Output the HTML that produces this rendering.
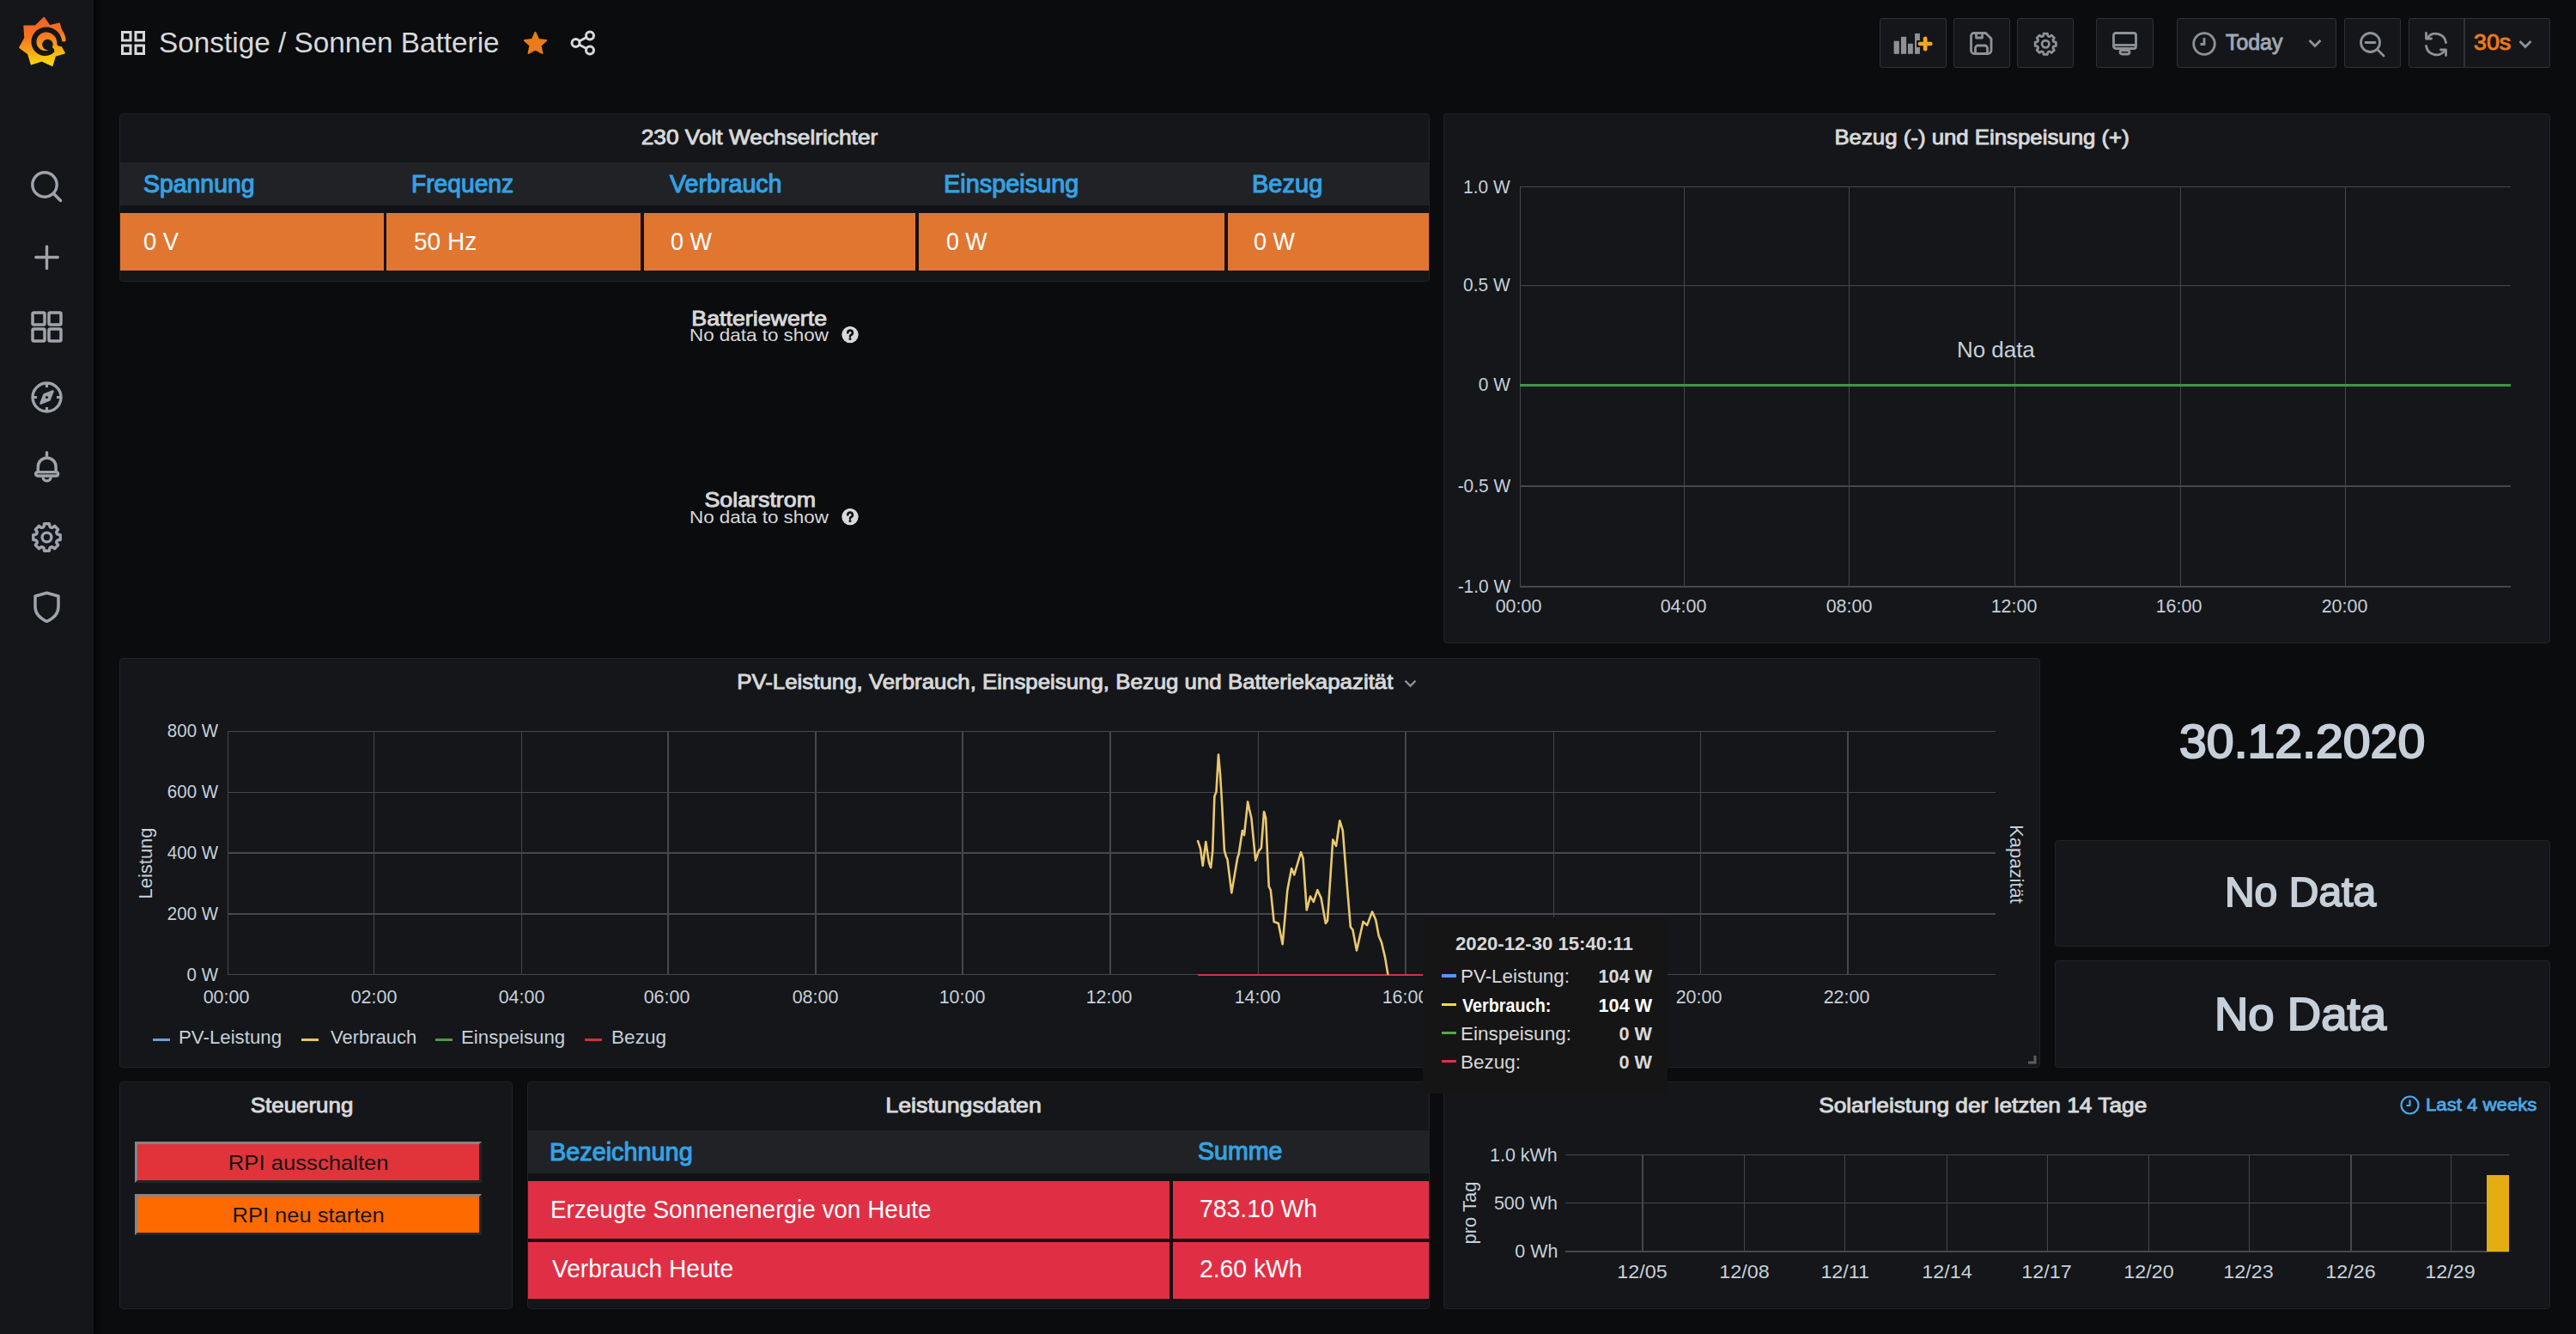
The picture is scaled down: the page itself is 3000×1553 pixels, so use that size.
<!DOCTYPE html>
<html><head><meta charset="utf-8"><style>
html,body{margin:0;padding:0;width:3000px;height:1553px;overflow:hidden;background:#0b0c0e;font-family:"Liberation Sans", sans-serif}
.a{position:absolute}
.t{position:absolute;line-height:1;white-space:nowrap;font-family:"Liberation Sans", sans-serif}
</style></head><body>
<div class="a" style="left:0px;top:0px;width:109px;height:1553px;background:#141619;"></div>
<div class="a" style="left:109px;top:0px;width:9px;height:1553px;background:linear-gradient(90deg,#040507,#0b0c0e);"></div>
<svg class="a" style="left:15px;top:15px" width="70" height="70" viewBox="0 0 70 70">
<defs><linearGradient id="lg" x1="0" y1="0" x2="0.15" y2="1">
<stop offset="0" stop-color="#f05a28"/><stop offset="0.45" stop-color="#f7791f"/><stop offset="1" stop-color="#fbd40c"/></linearGradient></defs>
<polygon fill="url(#lg)" stroke="url(#lg)" stroke-width="1.6" stroke-linejoin="round" points="36.20,5.51 42.61,14.94 54.04,12.33 56.07,19.06 59.01,24.27 60.52,29.03 60.86,32.00 55.31,38.21 60.07,46.69 49.26,50.04 45.65,61.39 33.68,55.85 21.51,59.81 17.73,47.51 7.87,40.40 14.10,29.15 13.12,15.22 26.52,14.99"/>
<path fill="none" stroke="#141619" stroke-width="6" stroke-linejoin="round" d="M46.69,42.89 L45.16,44.34 L43.38,45.51 L41.41,46.37 L39.29,46.88 L37.10,47.01 L34.89,46.75 L32.74,46.11 L30.71,45.09 L28.88,43.72 L27.30,42.04 L26.02,40.08 L25.09,37.91 L24.55,35.59 L24.42,33.19 L24.71,30.78 L25.42,28.44 L26.54,26.24 L28.04,24.24 L29.89,22.53 L32.02,21.15 L34.38,20.15 L36.90,19.57 L39.51,19.44 L42.12,19.77 L44.66,20.55 L47.04,21.77 L49.19,23.41 L51.04,25.41 L52.53,27.72 L53.59,30.28 L54.21,33.00 L54.34,35.81 L63,37"/>
<circle cx="40.4" cy="37.0" r="6.2" fill="#141619"/>
<path fill="none" stroke="#141619" stroke-width="4.2" stroke-linecap="round" d="M41.5 39 L46 43"/>
</svg>
<svg class="a" style="left:36.0px;top:199.0px" width="37" height="37" viewBox="0 0 37 37"><circle cx="16" cy="16" r="14.2" fill="none" stroke="#9fa3ab" stroke-width="3.4"/><path d="M26.5 26.5 L34.5 34.5" stroke="#9fa3ab" stroke-width="3.6" stroke-linecap="round"/></svg>
<svg class="a" style="left:36.0px;top:280.5px" width="37" height="37" viewBox="0 0 37 37"><path d="M18.5 6 V31.5 M5.8 18.5 H31.3" stroke="#9fa3ab" stroke-width="3.4" stroke-linecap="round"/></svg>
<svg class="a" style="left:36.0px;top:362.0px" width="37" height="37" viewBox="0 0 37 37"><rect x="2" y="2" width="14" height="14" rx="1.5" fill="none" stroke="#9fa3ab" stroke-width="3.5"/><rect x="21" y="2" width="14" height="14" rx="1.5" fill="none" stroke="#9fa3ab" stroke-width="3.5"/><rect x="2" y="21" width="14" height="14" rx="1.5" fill="none" stroke="#9fa3ab" stroke-width="3.5"/><rect x="21" y="21" width="14" height="14" rx="1.5" fill="none" stroke="#9fa3ab" stroke-width="3.5"/></svg>
<svg class="a" style="left:36.0px;top:443.5px" width="37" height="37" viewBox="0 0 37 37"><circle cx="18.5" cy="18.5" r="16.5" fill="none" stroke="#9fa3ab" stroke-width="3.4"/><path d="M18.5 2.5 V7 M18.5 30 V34.5 M2.5 18.5 H7 M30 18.5 H34.5" stroke="#9fa3ab" stroke-width="3.2"/><path d="M25.5 11.5 L21.5 21.5 L11.5 25.5 L15.5 15.5 Z" fill="#9fa3ab" stroke="#9fa3ab" stroke-width="2.6" stroke-linejoin="round"/><circle cx="18.5" cy="18.5" r="1.6" fill="#141619"/></svg>
<svg class="a" style="left:36.0px;top:525.0px" width="37" height="37" viewBox="0 0 37 37"><path d="M18.5 1.8 V5.5" stroke="#9fa3ab" stroke-width="3.4" stroke-linecap="round"/><path d="M8.3 24.5 V18.4 A10.4 10.4 0 0 1 29.1 18.4 V24.5" fill="none" stroke="#9fa3ab" stroke-width="3.5"/><rect x="5.6" y="24.6" width="26" height="4.4" rx="2.2" fill="none" stroke="#9fa3ab" stroke-width="3.4"/><path d="M14 30.3 A4.6 4.6 0 0 0 23.2 30.3" fill="none" stroke="#9fa3ab" stroke-width="3.3"/></svg>
<svg class="a" style="left:36.0px;top:606.5px" width="37" height="37" viewBox="0 0 37 37"><polygon points="13.75,7.04 15.05,6.07 15.58,2.77 21.42,2.77 21.95,6.07 23.25,7.04 24.85,7.27 27.56,5.31 31.69,9.44 29.73,12.15 29.96,13.75 30.93,15.05 34.23,15.58 34.23,21.42 30.93,21.95 29.96,23.25 29.73,24.85 31.69,27.56 27.56,31.69 24.85,29.73 23.25,29.96 21.95,30.93 21.42,34.23 15.58,34.23 15.05,30.93 13.75,29.96 12.15,29.73 9.44,31.69 5.31,27.56 7.27,24.85 7.04,23.25 6.07,21.95 2.77,21.42 2.77,15.58 6.07,15.05 7.04,13.75 7.27,12.15 5.31,9.44 9.44,5.31 12.15,7.27" fill="none" stroke="#9fa3ab" stroke-width="3.4" stroke-linejoin="round"/><circle cx="18.5" cy="18.5" r="5.4" fill="none" stroke="#9fa3ab" stroke-width="3.4"/></svg>
<svg class="a" style="left:36.0px;top:688.0px" width="37" height="37" viewBox="0 0 37 37"><path d="M18.5 2.3 L32 6 V18.5 C32 26.5 26 32 18.5 35.5 C11 32 5 26.5 5 18.5 V6 Z" fill="none" stroke="#9fa3ab" stroke-width="3.5" stroke-linejoin="round"/></svg>
<svg class="a" style="left:141px;top:36px" width="28" height="28" viewBox="0 0 28 28">
<g fill="none" stroke="#d8d9da" stroke-width="3"><rect x="1.5" y="1.5" width="9.5" height="9.5"/><rect x="17" y="1.5" width="9.5" height="9.5"/><rect x="1.5" y="17" width="9.5" height="9.5"/><rect x="17" y="17" width="9.5" height="9.5"/></g></svg>
<div class="t" id="title" style="top:33.15px;font-size:33px;color:#d8d9da;left:185.00px;"><span style="display:inline-block;transform:scaleX(1.0103);transform-origin:left">Sonstige / Sonnen Batterie</span></div>
<svg class="a" style="left:608px;top:36px" width="31" height="29" viewBox="0 0 24 23">
<path fill="#eb7b18" stroke="#eb7b18" stroke-width="1.6" stroke-linejoin="round" d="M12 1.5 L15 8 L22 8.7 L16.8 13.4 L18.3 20.5 L12 16.9 L5.7 20.5 L7.2 13.4 L2 8.7 L9 8 Z"/></svg>
<svg class="a" style="left:664px;top:35px" width="30" height="30" viewBox="0 0 30 30">
<g fill="none" stroke="#d8d9da" stroke-width="3"><circle cx="23" cy="6.5" r="4.5"/><circle cx="6.5" cy="15" r="4.5"/><circle cx="23" cy="23.5" r="4.5"/><path d="M10.5 13 L19 8.5 M10.5 17 L19 21.5"/></g></svg>
<div class="a" style="left:2189.3px;top:20.7px;width:77.29999999999973px;height:58.3px;background:#141619;border:1.5px solid #2e3135;border-radius:3px;box-sizing:border-box"></div>
<div class="a" style="left:2274.7px;top:20.7px;width:66.0px;height:58.3px;background:#141619;border:1.5px solid #2e3135;border-radius:3px;box-sizing:border-box"></div>
<div class="a" style="left:2349px;top:20.7px;width:65.80000000000018px;height:58.3px;background:#141619;border:1.5px solid #2e3135;border-radius:3px;box-sizing:border-box"></div>
<div class="a" style="left:2441.3px;top:20.7px;width:66.29999999999973px;height:58.3px;background:#141619;border:1.5px solid #2e3135;border-radius:3px;box-sizing:border-box"></div>
<div class="a" style="left:2534.5px;top:20.7px;width:186.69999999999982px;height:58.3px;background:#141619;border:1.5px solid #2e3135;border-radius:3px;box-sizing:border-box"></div>
<div class="a" style="left:2729.6px;top:20.7px;width:66.20000000000027px;height:58.3px;background:#141619;border:1.5px solid #2e3135;border-radius:3px;box-sizing:border-box"></div>
<div class="a" style="left:2804.5px;top:20.7px;width:165.5px;height:58.3px;background:#141619;border:1.5px solid #2e3135;border-radius:3px;box-sizing:border-box"></div>
<div class="a" style="left:2869.2px;top:21.7px;width:1.5px;height:56.3px;background:#2e3135;"></div>
<svg class="a" style="left:2205px;top:38px" width="48" height="26" viewBox="0 0 48 26">
<g fill="#8e9297"><rect x="0.6" y="9.7" width="6.2" height="15.1"/><rect x="8.9" y="4.8" width="6.2" height="20"/><rect x="16.9" y="12.8" width="5.9" height="12"/><rect x="25" y="0.9" width="5.9" height="23.9"/></g>
<path d="M37.15 3 V23 M27 13 H47.3" stroke="#141619" stroke-width="8"/>
<path d="M37.15 6.8 V19.2 M31 13 H43.3" stroke="#f5a623" stroke-width="4.7" stroke-linecap="round"/></svg>
<svg class="a" style="left:2294px;top:37px" width="27" height="27" viewBox="0 0 27 27">
<g fill="none" stroke="#8e9297" stroke-width="2.8" stroke-linejoin="round"><path d="M4 1.5 H18.5 L25 8 V21.5 A4 4 0 0 1 21 25.5 H5.5 A4 4 0 0 1 1.5 21.5 V5.5 A4 4 0 0 1 4 1.5 Z"/><path d="M7.5 2 V7 H14.5 V2"/><path d="M6.5 25 V19 A3 3 0 0 1 9.5 16 H17.5 A3 3 0 0 1 20.5 19 V25"/></g></svg>
<svg class="a" style="left:2367.5px;top:36.5px" width="28.5" height="28.5" viewBox="0 0 37 37"><polygon points="13.75,7.04 15.05,6.07 15.58,2.77 21.42,2.77 21.95,6.07 23.25,7.04 24.85,7.27 27.56,5.31 31.69,9.44 29.73,12.15 29.96,13.75 30.93,15.05 34.23,15.58 34.23,21.42 30.93,21.95 29.96,23.25 29.73,24.85 31.69,27.56 27.56,31.69 24.85,29.73 23.25,29.96 21.95,30.93 21.42,34.23 15.58,34.23 15.05,30.93 13.75,29.96 12.15,29.73 9.44,31.69 5.31,27.56 7.27,24.85 7.04,23.25 6.07,21.95 2.77,21.42 2.77,15.58 6.07,15.05 7.04,13.75 7.27,12.15 5.31,9.44 9.44,5.31 12.15,7.27" fill="none" stroke="#8e9297" stroke-width="3.6" stroke-linejoin="round"/><circle cx="18.5" cy="18.5" r="5.4" fill="none" stroke="#8e9297" stroke-width="3.6"/></svg>
<svg class="a" style="left:2460px;top:37px" width="29" height="28" viewBox="0 0 29 28">
<g fill="none" stroke="#8e9297" stroke-width="2.8" stroke-linejoin="round"><rect x="1.5" y="1.5" width="26" height="18" rx="2.5"/><path d="M1.5 15.5 H27.5"/><rect x="9" y="21.5" width="11" height="4.5" rx="2.2"/></g></svg>
<svg class="a" style="left:2553px;top:37px" width="28" height="28" viewBox="0 0 28 28">
<g fill="none" stroke="#8e9297" stroke-width="2.8"><circle cx="14" cy="14" r="12.3"/><path d="M14 7 V14.5 H9.5"/></g></svg>
<div class="t" id="today" style="top:37.12px;font-size:25.5px;color:#9fa7b3;-webkit-text-stroke:0.97px #9fa7b3;left:2592.30px;"><span style="display:inline-block;transform:scaleX(0.9751);transform-origin:left">Today</span></div>
<svg class="a" style="left:2688px;top:45px" width="16" height="11" viewBox="0 0 16 11"><path d="M1.5 2 L8 8.5 L14.5 2" fill="none" stroke="#8e9297" stroke-width="2.8"/></svg>
<svg class="a" style="left:2748px;top:37px" width="30" height="30" viewBox="0 0 30 30">
<g fill="none" stroke="#8e9297" stroke-width="2.8" stroke-linecap="round"><circle cx="12.5" cy="12.5" r="11"/><path d="M20.5 20.5 L28 28 M7 12.5 H18"/></g></svg>
<svg class="a" style="left:2822px;top:36px" width="30" height="31" viewBox="0 0 30 31">
<g fill="none" stroke="#8e9297" stroke-width="2.8" stroke-linecap="round" stroke-linejoin="round"><path d="M26.5 13.5 A12 12 0 0 0 5 8"/><path d="M3.5 17.5 A12 12 0 0 0 25 23"/><path d="M3.5 2.5 V9 H9.5"/><path d="M26.5 28.5 V22 H20.5"/></g></svg>
<div class="t" id="30s" style="top:37.33px;font-size:25.5px;color:#eb7b18;-webkit-text-stroke:0.97px #eb7b18;left:2880.50px;"><span style="display:inline-block;transform:scaleX(1.0506);transform-origin:left">30s</span></div>
<svg class="a" style="left:2933px;top:46px" width="16" height="11" viewBox="0 0 16 11"><path d="M1.5 2 L8 8.5 L14.5 2" fill="none" stroke="#8e9297" stroke-width="2.8"/></svg>
<div class="a" style="left:139px;top:132px;width:1526px;height:195.5px;background:#141619;border:1px solid #202226;border-radius:4px;box-sizing:border-box"></div>
<div class="t" id="p1title" style="top:147.88px;font-size:24.5px;color:#d8d9da;-webkit-text-stroke:0.93px #d8d9da;left:-116.00px;width:2000px;text-align:center;"><span style="display:inline-block;transform:scaleX(1.0726);transform-origin:center">230 Volt Wechselrichter</span></div>
<div class="a" style="left:140px;top:189px;width:1524px;height:50px;background:#202226;"></div>
<div class="a" style="left:140px;top:239px;width:1524px;height:9px;background:#111216;"></div>
<div class="a" style="left:140px;top:314.8px;width:1524px;height:2.5px;background:#111216;"></div>
<div class="a" style="left:140px;top:248px;width:1524px;height:67px;background:#1a0f08;"></div>
<div class="a" style="left:140px;top:248px;width:307px;height:66.8px;background:#e07630;"></div>
<div class="a" style="left:450px;top:248px;width:296px;height:66.8px;background:#e07630;"></div>
<div class="a" style="left:750px;top:248px;width:316px;height:66.8px;background:#e07630;"></div>
<div class="a" style="left:1070px;top:248px;width:356px;height:66.8px;background:#e07630;"></div>
<div class="a" style="left:1430px;top:248px;width:234px;height:66.8px;background:#e07630;"></div>
<div class="t" id="h1" style="top:198.50px;font-size:30px;color:#33a2e5;-webkit-text-stroke:1.14px #33a2e5;left:167.00px;"><span style="display:inline-block;transform:scaleX(0.9471);transform-origin:left">Spannung</span></div>
<div class="t" id="h2" style="top:198.50px;font-size:30px;color:#33a2e5;-webkit-text-stroke:1.14px #33a2e5;left:479.00px;"><span style="display:inline-block;transform:scaleX(0.9395);transform-origin:left">Frequenz</span></div>
<div class="t" id="h3" style="top:198.50px;font-size:30px;color:#33a2e5;-webkit-text-stroke:1.14px #33a2e5;left:779.50px;"><span style="display:inline-block;transform:scaleX(0.9546);transform-origin:left">Verbrauch</span></div>
<div class="t" id="h4" style="top:198.50px;font-size:30px;color:#33a2e5;-webkit-text-stroke:1.14px #33a2e5;left:1098.50px;"><span style="display:inline-block;transform:scaleX(0.9627);transform-origin:left">Einspeisung</span></div>
<div class="t" id="h5" style="top:198.50px;font-size:30px;color:#33a2e5;-webkit-text-stroke:1.14px #33a2e5;left:1458.00px;"><span style="display:inline-block;transform:scaleX(0.9680);transform-origin:left">Bezug</span></div>
<div class="t" id="v1" style="top:265.50px;font-size:30px;color:#ffffff;left:167.00px;"><span style="display:inline-block;transform:scaleX(0.9113);transform-origin:left">0 V</span></div>
<div class="t" id="v2" style="top:265.50px;font-size:30px;color:#ffffff;left:482.00px;"><span style="display:inline-block;transform:scaleX(0.9335);transform-origin:left">50 Hz</span></div>
<div class="t" id="v3" style="top:265.50px;font-size:30px;color:#ffffff;left:780.50px;"><span style="display:inline-block;transform:scaleX(0.9004);transform-origin:left">0 W</span></div>
<div class="t" id="v4" style="top:265.50px;font-size:30px;color:#ffffff;left:1101.50px;"><span style="display:inline-block;transform:scaleX(0.8929);transform-origin:left">0 W</span></div>
<div class="t" id="v5" style="top:265.50px;font-size:30px;color:#ffffff;left:1460.30px;"><span style="display:inline-block;transform:scaleX(0.9008);transform-origin:left">0 W</span></div>
<div class="t" id="bw" style="top:358.57px;font-size:24.5px;color:#d8d9da;-webkit-text-stroke:0.93px #d8d9da;left:-116.00px;width:2000px;text-align:center;"><span style="display:inline-block;transform:scaleX(1.0924);transform-origin:center">Batteriewerte</span></div>
<div class="t" id="nd1" style="top:379.45px;font-size:21px;color:#d8d9da;left:802.50px;"><span style="display:inline-block;transform:scaleX(1.0667);transform-origin:left">No data to show</span></div>
<svg class="a" style="left:980px;top:380px" width="20" height="20" viewBox="0 0 20 20"><circle cx="10" cy="9.6" r="9.7" fill="#d8d9da"/>
<path d="M7.3 7.4 A2.8 2.7 0 1 1 11 9.9 C10.2 10.4 10 10.9 10 11.8" fill="none" stroke="#111" stroke-width="2.6" stroke-linecap="round"/><circle cx="10" cy="14.6" r="1.5" fill="#111"/></svg>
<div class="t" id="ss" style="top:569.88px;font-size:24.5px;color:#d8d9da;-webkit-text-stroke:0.93px #d8d9da;left:-115.20px;width:2000px;text-align:center;"><span style="display:inline-block;transform:scaleX(1.0932);transform-origin:center">Solarstrom</span></div>
<div class="t" id="nd2" style="top:590.85px;font-size:21px;color:#d8d9da;left:802.50px;"><span style="display:inline-block;transform:scaleX(1.0667);transform-origin:left">No data to show</span></div>
<svg class="a" style="left:980px;top:591.5px" width="20" height="20" viewBox="0 0 20 20"><circle cx="10" cy="9.6" r="9.7" fill="#d8d9da"/>
<path d="M7.3 7.4 A2.8 2.7 0 1 1 11 9.9 C10.2 10.4 10 10.9 10 11.8" fill="none" stroke="#111" stroke-width="2.6" stroke-linecap="round"/><circle cx="10" cy="14.6" r="1.5" fill="#111"/></svg>
<div class="a" style="left:1681px;top:132px;width:1289px;height:617px;background:#141619;border:1px solid #202226;border-radius:4px;box-sizing:border-box"></div>
<div class="t" id="p2title" style="top:147.88px;font-size:24.5px;color:#d8d9da;-webkit-text-stroke:0.93px #d8d9da;left:1308.30px;width:2000px;text-align:center;"><span style="display:inline-block;transform:scaleX(1.0527);transform-origin:center">Bezug (-) und Einspeisung (+)</span></div>
<div class="a" style="left:1770.3px;top:217.18px;width:1153.7px;height:1.25px;background:#45474b"></div>
<div class="a" style="left:1770.3px;top:331.88px;width:1153.7px;height:1.25px;background:#45474b"></div>
<div class="a" style="left:1770.3px;top:447.88px;width:1153.7px;height:1.25px;background:#45474b"></div>
<div class="a" style="left:1770.3px;top:565.38px;width:1153.7px;height:1.25px;background:#45474b"></div>
<div class="a" style="left:1770.3px;top:682.38px;width:1153.7px;height:1.25px;background:#45474b"></div>
<div class="a" style="left:1769.67px;top:217.8px;width:1.25px;height:465.2px;background:#45474b"></div>
<div class="a" style="left:1960.67px;top:217.8px;width:1.25px;height:465.2px;background:#45474b"></div>
<div class="a" style="left:2153.18px;top:217.8px;width:1.25px;height:465.2px;background:#45474b"></div>
<div class="a" style="left:2345.88px;top:217.8px;width:1.25px;height:465.2px;background:#45474b"></div>
<div class="a" style="left:2538.57px;top:217.8px;width:1.25px;height:465.2px;background:#45474b"></div>
<div class="a" style="left:2731.07px;top:217.8px;width:1.25px;height:465.2px;background:#45474b"></div>
<div class="t" id="p2y0" style="top:206.68px;font-size:22.5px;color:#c7d0d9;left:-241.00px;width:2000px;text-align:right;"><span style="display:inline-block;transform:scaleX(0.9300);transform-origin:right">1.0 W</span></div>
<div class="t" id="p2y1" style="top:321.38px;font-size:22.5px;color:#c7d0d9;left:-241.00px;width:2000px;text-align:right;"><span style="display:inline-block;transform:scaleX(0.9300);transform-origin:right">0.5 W</span></div>
<div class="t" id="p2y2" style="top:437.38px;font-size:22.5px;color:#c7d0d9;left:-241.00px;width:2000px;text-align:right;"><span style="display:inline-block;transform:scaleX(0.9300);transform-origin:right">0 W</span></div>
<div class="t" id="p2y3" style="top:554.88px;font-size:22.5px;color:#c7d0d9;left:-241.00px;width:2000px;text-align:right;"><span style="display:inline-block;transform:scaleX(0.9300);transform-origin:right">-0.5 W</span></div>
<div class="t" id="p2y4" style="top:671.88px;font-size:22.5px;color:#c7d0d9;left:-241.00px;width:2000px;text-align:right;"><span style="display:inline-block;transform:scaleX(0.9300);transform-origin:right">-1.0 W</span></div>
<div class="t" id="p2x0" style="top:695.30px;font-size:22px;color:#c7d0d9;left:768.30px;width:2000px;text-align:center;"><span style="display:inline-block;transform:scaleX(0.9750);transform-origin:center">00:00</span></div>
<div class="t" id="p2x1" style="top:695.30px;font-size:22px;color:#c7d0d9;left:960.90px;width:2000px;text-align:center;"><span style="display:inline-block;transform:scaleX(0.9750);transform-origin:center">04:00</span></div>
<div class="t" id="p2x2" style="top:695.30px;font-size:22px;color:#c7d0d9;left:1153.80px;width:2000px;text-align:center;"><span style="display:inline-block;transform:scaleX(0.9750);transform-origin:center">08:00</span></div>
<div class="t" id="p2x3" style="top:695.30px;font-size:22px;color:#c7d0d9;left:1345.90px;width:2000px;text-align:center;"><span style="display:inline-block;transform:scaleX(0.9750);transform-origin:center">12:00</span></div>
<div class="t" id="p2x4" style="top:695.30px;font-size:22px;color:#c7d0d9;left:1538.00px;width:2000px;text-align:center;"><span style="display:inline-block;transform:scaleX(0.9750);transform-origin:center">16:00</span></div>
<div class="t" id="p2x5" style="top:695.30px;font-size:22px;color:#c7d0d9;left:1730.90px;width:2000px;text-align:center;"><span style="display:inline-block;transform:scaleX(0.9750);transform-origin:center">20:00</span></div>
<div class="a" style="left:1770.3px;top:447.10px;width:1153.7px;height:3px;background:#3a9748"></div>
<div class="t" id="nodata" style="top:393.78px;font-size:26.5px;color:#c7d0d9;left:2279.00px;"><span style="display:inline-block;transform:scaleX(0.9780);transform-origin:left">No data</span></div>
<div class="a" style="left:139px;top:766px;width:2237px;height:477px;background:#141619;border:1px solid #202226;border-radius:4px;box-sizing:border-box"></div>
<div class="t" id="p3title" style="top:781.57px;font-size:24.5px;color:#d8d9da;-webkit-text-stroke:0.93px #d8d9da;left:239.80px;width:2000px;text-align:center;"><span style="display:inline-block;transform:scaleX(1.0546);transform-origin:center">PV-Leistung, Verbrauch, Einspeisung, Bezug und Batteriekapazität</span></div>
<svg class="a" style="left:1635px;top:790px" width="15" height="11" viewBox="0 0 15 11"><path d="M1.5 2.5 L7.5 8.5 L13.5 2.5" fill="none" stroke="#8e9297" stroke-width="2.4"/></svg>
<div class="a" style="left:265.2px;top:850.67px;width:2058.4px;height:1.25px;background:#45474b"></div>
<div class="a" style="left:265.2px;top:921.55px;width:2058.4px;height:1.25px;background:#45474b"></div>
<div class="a" style="left:265.2px;top:992.43px;width:2058.4px;height:1.25px;background:#45474b"></div>
<div class="a" style="left:265.2px;top:1063.32px;width:2058.4px;height:1.25px;background:#45474b"></div>
<div class="a" style="left:265.2px;top:1134.19px;width:2058.4px;height:1.25px;background:#45474b"></div>
<div class="a" style="left:264.57px;top:851.3px;width:1.25px;height:283.5px;background:#45474b"></div>
<div class="a" style="left:434.77px;top:851.3px;width:1.25px;height:283.5px;background:#45474b"></div>
<div class="a" style="left:606.88px;top:851.3px;width:1.25px;height:283.5px;background:#45474b"></div>
<div class="a" style="left:777.38px;top:851.3px;width:1.25px;height:283.5px;background:#45474b"></div>
<div class="a" style="left:949.38px;top:851.3px;width:1.25px;height:283.5px;background:#45474b"></div>
<div class="a" style="left:1120.38px;top:851.3px;width:1.25px;height:283.5px;background:#45474b"></div>
<div class="a" style="left:1292.38px;top:851.3px;width:1.25px;height:283.5px;background:#45474b"></div>
<div class="a" style="left:1465.08px;top:851.3px;width:1.25px;height:283.5px;background:#45474b"></div>
<div class="a" style="left:1636.47px;top:851.3px;width:1.25px;height:283.5px;background:#45474b"></div>
<div class="a" style="left:1808.67px;top:851.3px;width:1.25px;height:283.5px;background:#45474b"></div>
<div class="a" style="left:1979.67px;top:851.3px;width:1.25px;height:283.5px;background:#45474b"></div>
<div class="a" style="left:2151.38px;top:851.3px;width:1.25px;height:283.5px;background:#45474b"></div>
<div class="t" id="p3y0" style="top:840.17px;font-size:22.5px;color:#c7d0d9;left:-1746.40px;width:2000px;text-align:right;"><span style="display:inline-block;transform:scaleX(0.9100);transform-origin:right">800 W</span></div>
<div class="t" id="p3y1" style="top:911.05px;font-size:22.5px;color:#c7d0d9;left:-1746.40px;width:2000px;text-align:right;"><span style="display:inline-block;transform:scaleX(0.9100);transform-origin:right">600 W</span></div>
<div class="t" id="p3y2" style="top:981.93px;font-size:22.5px;color:#c7d0d9;left:-1746.40px;width:2000px;text-align:right;"><span style="display:inline-block;transform:scaleX(0.9100);transform-origin:right">400 W</span></div>
<div class="t" id="p3y3" style="top:1052.82px;font-size:22.5px;color:#c7d0d9;left:-1746.40px;width:2000px;text-align:right;"><span style="display:inline-block;transform:scaleX(0.9100);transform-origin:right">200 W</span></div>
<div class="t" id="p3y4" style="top:1123.69px;font-size:22.5px;color:#c7d0d9;left:-1746.40px;width:2000px;text-align:right;"><span style="display:inline-block;transform:scaleX(0.9100);transform-origin:right">0 W</span></div>
<div class="t" id="p3x0" style="top:1149.80px;font-size:22px;color:#c7d0d9;left:-736.90px;width:2000px;text-align:center;"><span style="display:inline-block;transform:scaleX(0.9750);transform-origin:center">00:00</span></div>
<div class="t" id="p3x1" style="top:1149.80px;font-size:22px;color:#c7d0d9;left:-564.81px;width:2000px;text-align:center;"><span style="display:inline-block;transform:scaleX(0.9750);transform-origin:center">02:00</span></div>
<div class="t" id="p3x2" style="top:1149.80px;font-size:22px;color:#c7d0d9;left:-392.62px;width:2000px;text-align:center;"><span style="display:inline-block;transform:scaleX(0.9750);transform-origin:center">04:00</span></div>
<div class="t" id="p3x3" style="top:1149.80px;font-size:22px;color:#c7d0d9;left:-223.03px;width:2000px;text-align:center;"><span style="display:inline-block;transform:scaleX(0.9750);transform-origin:center">06:00</span></div>
<div class="t" id="p3x4" style="top:1149.80px;font-size:22px;color:#c7d0d9;left:-50.44px;width:2000px;text-align:center;"><span style="display:inline-block;transform:scaleX(0.9750);transform-origin:center">08:00</span></div>
<div class="t" id="p3x5" style="top:1149.80px;font-size:22px;color:#c7d0d9;left:120.15px;width:2000px;text-align:center;"><span style="display:inline-block;transform:scaleX(0.9750);transform-origin:center">10:00</span></div>
<div class="t" id="p3x6" style="top:1149.80px;font-size:22px;color:#c7d0d9;left:291.74px;width:2000px;text-align:center;"><span style="display:inline-block;transform:scaleX(0.9750);transform-origin:center">12:00</span></div>
<div class="t" id="p3x7" style="top:1149.80px;font-size:22px;color:#c7d0d9;left:464.53px;width:2000px;text-align:center;"><span style="display:inline-block;transform:scaleX(0.9750);transform-origin:center">14:00</span></div>
<div class="t" id="p3x8" style="top:1149.80px;font-size:22px;color:#c7d0d9;left:636.52px;width:2000px;text-align:center;"><span style="display:inline-block;transform:scaleX(0.9750);transform-origin:center">16:00</span></div>
<div class="t" id="p3x9" style="top:1149.80px;font-size:22px;color:#c7d0d9;left:811.81px;width:2000px;text-align:center;"><span style="display:inline-block;transform:scaleX(0.9750);transform-origin:center">18:00</span></div>
<div class="t" id="p3x10" style="top:1149.80px;font-size:22px;color:#c7d0d9;left:978.90px;width:2000px;text-align:center;"><span style="display:inline-block;transform:scaleX(0.9750);transform-origin:center">20:00</span></div>
<div class="t" id="p3x11" style="top:1149.80px;font-size:22px;color:#c7d0d9;left:1150.69px;width:2000px;text-align:center;"><span style="display:inline-block;transform:scaleX(0.9750);transform-origin:center">22:00</span></div>
<div class="t" style="left:69.5px;top:991.9px;width:200px;height:26px;line-height:26px;text-align:center;font-size:22px;color:#c7d0d9;transform:rotate(-90deg)">Leistung</div>
<div class="t" style="left:2247.5px;top:992.5px;width:200px;height:26px;line-height:26px;text-align:center;font-size:22px;color:#c7d0d9;transform:rotate(90deg)">Kapazität</div>
<div class="a" style="left:178.0px;top:1208.50px;width:20.0px;height:3px;background:#6e9fd9"></div>
<div class="t" id="lg_PV-Leistung" style="top:1197.38px;font-size:22.5px;color:#c7d0d9;left:208.40px;"><span style="display:inline-block;transform:scaleX(0.9893);transform-origin:left">PV-Leistung</span></div>
<div class="a" style="left:351.0px;top:1208.50px;width:20.0px;height:3px;background:#e8c460"></div>
<div class="t" id="lg_Verbrauch" style="top:1197.38px;font-size:22.5px;color:#c7d0d9;left:384.60px;"><span style="display:inline-block;transform:scaleX(0.9764);transform-origin:left">Verbrauch</span></div>
<div class="a" style="left:507.0px;top:1208.50px;width:20.0px;height:3px;background:#4f9a48"></div>
<div class="t" id="lg_Einspeisung" style="top:1197.38px;font-size:22.5px;color:#c7d0d9;left:537.40px;"><span style="display:inline-block;transform:scaleX(0.9885);transform-origin:left">Einspeisung</span></div>
<div class="a" style="left:681.4px;top:1208.50px;width:20.0px;height:3px;background:#cf3040"></div>
<div class="t" id="lg_Bezug" style="top:1197.38px;font-size:22.5px;color:#c7d0d9;left:712.10px;"><span style="display:inline-block;transform:scaleX(1.0039);transform-origin:left">Bezug</span></div>
<div class="a" style="left:1395.0px;top:1133.50px;width:261.7px;height:2.6px;background:#d4323f"></div>
<svg class="a" style="left:1300px;top:850px" width="400" height="300" viewBox="0 0 400 300"><polyline points="95.07,129.15 98.01,137.96 100.73,157.89 104.30,129.99 106.40,144.26 108.08,154.75 110.17,159.99 112.27,140.06 114.37,77.13 116.47,71.88 118.98,28.46 121.08,51.96 122.76,79.23 125.91,140.06 128.00,147.40 129.47,150.55 134.30,189.36 141.22,148.45 142.69,144.26 146.88,116.99 148.98,122.23 153.18,83.42 154.86,91.81 157.37,102.30 162.20,151.60 165.76,141.11 168.91,136.91 172.06,94.96 174.15,102.30 177.72,182.02 179.82,186.21 183.59,222.92 188.84,225.02 193.66,249.14 199.33,186.21 204.15,161.04 207.30,168.38 215.06,142.16 217.58,149.50 221.77,209.29 225.97,193.55 229.75,199.85 234.36,186.21 238.64,195.65 243.88,225.02 245.98,221.87 252.27,127.47 256.05,134.82 260.24,105.45 263.81,116.99 269.05,184.11 272.83,229.22 275.35,232.36 279.96,256.49 287.51,222.92 292.13,227.12 298.00,211.38 302.20,220.82 305.76,239.70 308.91,247.05 313.11,264.88 316.25,283.76" fill="none" stroke="#eac86e" stroke-width="2.6" stroke-linejoin="round" stroke-linecap="round"/></svg>
<svg class="a" style="left:2360px;top:1227px" width="12" height="12" viewBox="0 0 12 12"><path d="M10 2 V10 H2" fill="none" stroke="#5a5d62" stroke-width="3"/></svg>
<div class="t" id="date" style="top:835.40px;font-size:56px;color:#c7d0d9;-webkit-text-stroke:2.13px #c7d0d9;left:1681.30px;width:2000px;text-align:center;"><span style="display:inline-block;transform:scaleX(1.0210);transform-origin:center">30.12.2020</span></div>
<div class="a" style="left:2393px;top:977.5px;width:577px;height:124.5px;background:#141619;border:1px solid #202226;border-radius:4px;box-sizing:border-box"></div>
<div class="t" id="nod1" style="top:1014.70px;font-size:48px;color:#c7d0d9;-webkit-text-stroke:1.82px #c7d0d9;left:1678.80px;width:2000px;text-align:center;"><span style="display:inline-block;transform:scaleX(1.0008);transform-origin:center">No Data</span></div>
<div class="a" style="left:2393px;top:1118px;width:577px;height:124.5px;background:#141619;border:1px solid #202226;border-radius:4px;box-sizing:border-box"></div>
<div class="t" id="nod2" style="top:1154.08px;font-size:54.5px;color:#c7d0d9;-webkit-text-stroke:2.07px #c7d0d9;left:1679.00px;width:2000px;text-align:center;"><span style="display:inline-block;transform:scaleX(1.0010);transform-origin:center">No Data</span></div>
<div class="a" style="left:139px;top:1259px;width:458px;height:265px;background:#141619;border:1px solid #202226;border-radius:4px;box-sizing:border-box"></div>
<div class="t" id="st_title" style="top:1274.58px;font-size:24.5px;color:#d8d9da;-webkit-text-stroke:0.93px #d8d9da;left:-648.70px;width:2000px;text-align:center;"><span style="display:inline-block;transform:scaleX(1.0581);transform-origin:center">Steuerung</span></div>
<div class="a" style="left:156.8px;top:1329px;width:404.40000000000003px;height:48.200000000000045px;box-sizing:border-box;background:#e0333a;border-style:solid;border-width:3px;border-color:#858585 #232528 #232528 #858585"></div>
<div class="t" id="b1" style="top:1341.58px;font-size:24.5px;color:#151515;left:-640.70px;width:2000px;text-align:center;"><span style="display:inline-block;transform:scaleX(1.0470);transform-origin:center">RPI ausschalten</span></div>
<div class="a" style="left:156.8px;top:1390.4px;width:404.40000000000003px;height:48.09999999999991px;box-sizing:border-box;background:#ff6a00;border-style:solid;border-width:3px;border-color:#858585 #232528 #232528 #858585"></div>
<div class="t" id="b2" style="top:1402.97px;font-size:24.5px;color:#151515;left:-640.70px;width:2000px;text-align:center;"><span style="display:inline-block;transform:scaleX(1.0409);transform-origin:center">RPI neu starten</span></div>
<div class="a" style="left:613.6px;top:1259px;width:1051.4px;height:265px;background:#141619;border:1px solid #202226;border-radius:4px;box-sizing:border-box"></div>
<div class="t" id="ld_title" style="top:1274.88px;font-size:24.5px;color:#d8d9da;-webkit-text-stroke:0.93px #d8d9da;left:121.70px;width:2000px;text-align:center;"><span style="display:inline-block;transform:scaleX(1.0925);transform-origin:center">Leistungsdaten</span></div>
<div class="a" style="left:614.6px;top:1316.3px;width:1049.4px;height:50px;background:#202226;"></div>
<div class="a" style="left:614.6px;top:1366.3px;width:1049.4px;height:8.7px;background:#111216;"></div>
<div class="a" style="left:614.6px;top:1375px;width:1049.4px;height:137px;background:#1a0c0e;"></div>
<div class="a" style="left:614.6px;top:1375px;width:747.4px;height:66.79999999999995px;background:#e02f44;"></div>
<div class="a" style="left:1366px;top:1375px;width:298px;height:66.79999999999995px;background:#e02f44;"></div>
<div class="a" style="left:614.6px;top:1445.8px;width:747.4px;height:65.90000000000009px;background:#e02f44;"></div>
<div class="a" style="left:1366px;top:1445.8px;width:298px;height:65.90000000000009px;background:#e02f44;"></div>
<div class="a" style="left:614.6px;top:1511.7px;width:1049.4px;height:2px;background:#111216;"></div>
<div class="t" id="ld_h1" style="top:1325.50px;font-size:30px;color:#33a2e5;-webkit-text-stroke:1.14px #33a2e5;left:640.30px;"><span style="display:inline-block;transform:scaleX(0.9609);transform-origin:left">Bezeichnung</span></div>
<div class="t" id="ld_h2" style="top:1325.00px;font-size:30px;color:#33a2e5;-webkit-text-stroke:1.14px #33a2e5;left:1394.60px;"><span style="display:inline-block;transform:scaleX(0.9511);transform-origin:left">Summe</span></div>
<div class="t" id="ld_r1" style="top:1392.60px;font-size:30px;color:#ffffff;left:641.00px;"><span style="display:inline-block;transform:scaleX(0.9299);transform-origin:left">Erzeugte Sonnenenergie von Heute</span></div>
<div class="t" id="ld_v1" style="top:1392.00px;font-size:30px;color:#ffffff;left:1397.00px;"><span style="display:inline-block;transform:scaleX(0.9452);transform-origin:left">783.10 Wh</span></div>
<div class="t" id="ld_r2" style="top:1462.40px;font-size:30px;color:#ffffff;left:643.00px;"><span style="display:inline-block;transform:scaleX(0.9373);transform-origin:left">Verbrauch Heute</span></div>
<div class="t" id="ld_v2" style="top:1462.30px;font-size:30px;color:#ffffff;left:1397.00px;"><span style="display:inline-block;transform:scaleX(0.9432);transform-origin:left">2.60 kWh</span></div>
<div class="a" style="left:1681px;top:1259px;width:1289px;height:265px;background:#141619;border:1px solid #202226;border-radius:4px;box-sizing:border-box"></div>
<div class="t" id="sl_title" style="top:1274.58px;font-size:24.5px;color:#d8d9da;-webkit-text-stroke:0.93px #d8d9da;left:1308.80px;width:2000px;text-align:center;"><span style="display:inline-block;transform:scaleX(1.0722);transform-origin:center">Solarleistung der letzten 14 Tage</span></div>
<svg class="a" style="left:2795px;top:1275px" width="23" height="23" viewBox="0 0 23 23"><g fill="none" stroke="#4ea7e6" stroke-width="2.2"><circle cx="11.5" cy="11.5" r="10"/><path d="M11.5 5.5 V12 H7.5"/></g></svg>
<div class="t" id="sl_last" style="top:1274.95px;font-size:21px;color:#4ea7e6;-webkit-text-stroke:0.80px #4ea7e6;left:2825.20px;"><span style="display:inline-block;transform:scaleX(1.0556);transform-origin:left">Last 4 weeks</span></div>
<div class="a" style="left:1823.4px;top:1343.97px;width:1098.3px;height:1.25px;background:#45474b"></div>
<div class="a" style="left:1823.4px;top:1400.17px;width:1098.3px;height:1.25px;background:#45474b"></div>
<div class="a" style="left:1823.4px;top:1456.38px;width:1098.3px;height:1.25px;background:#45474b"></div>
<div class="a" style="left:1912.38px;top:1344.6px;width:1.25px;height:112.4px;background:#45474b"></div>
<div class="a" style="left:2030.97px;top:1344.6px;width:1.25px;height:112.4px;background:#45474b"></div>
<div class="a" style="left:2148.07px;top:1344.6px;width:1.25px;height:112.4px;background:#45474b"></div>
<div class="a" style="left:2266.68px;top:1344.6px;width:1.25px;height:112.4px;background:#45474b"></div>
<div class="a" style="left:2383.57px;top:1344.6px;width:1.25px;height:112.4px;background:#45474b"></div>
<div class="a" style="left:2501.78px;top:1344.6px;width:1.25px;height:112.4px;background:#45474b"></div>
<div class="a" style="left:2618.68px;top:1344.6px;width:1.25px;height:112.4px;background:#45474b"></div>
<div class="a" style="left:2737.38px;top:1344.6px;width:1.25px;height:112.4px;background:#45474b"></div>
<div class="a" style="left:2853.68px;top:1344.6px;width:1.25px;height:112.4px;background:#45474b"></div>
<div class="t" id="sly0" style="top:1333.90px;font-size:22px;color:#c7d0d9;left:-186.00px;width:2000px;text-align:right;"><span style="display:inline-block;transform:scaleX(0.9750);transform-origin:right">1.0 kWh</span></div>
<div class="t" id="sly1" style="top:1390.10px;font-size:22px;color:#c7d0d9;left:-186.00px;width:2000px;text-align:right;"><span style="display:inline-block;transform:scaleX(0.9750);transform-origin:right">500 Wh</span></div>
<div class="t" id="sly2" style="top:1446.30px;font-size:22px;color:#c7d0d9;left:-186.00px;width:2000px;text-align:right;"><span style="display:inline-block;transform:scaleX(0.9750);transform-origin:right">0 Wh</span></div>
<div class="t" id="slx0" style="top:1470.10px;font-size:22px;color:#c7d0d9;left:913.00px;width:2000px;text-align:center;"><span style="display:inline-block;transform:scaleX(1.0600);transform-origin:center">12/05</span></div>
<div class="t" id="slx1" style="top:1470.10px;font-size:22px;color:#c7d0d9;left:1031.52px;width:2000px;text-align:center;"><span style="display:inline-block;transform:scaleX(1.0600);transform-origin:center">12/08</span></div>
<div class="t" id="slx2" style="top:1470.10px;font-size:22px;color:#c7d0d9;left:1148.54px;width:2000px;text-align:center;"><span style="display:inline-block;transform:scaleX(1.0600);transform-origin:center">12/11</span></div>
<div class="t" id="slx3" style="top:1470.10px;font-size:22px;color:#c7d0d9;left:1267.06px;width:2000px;text-align:center;"><span style="display:inline-block;transform:scaleX(1.0600);transform-origin:center">12/14</span></div>
<div class="t" id="slx4" style="top:1470.10px;font-size:22px;color:#c7d0d9;left:1383.68px;width:2000px;text-align:center;"><span style="display:inline-block;transform:scaleX(1.0600);transform-origin:center">12/17</span></div>
<div class="t" id="slx5" style="top:1470.10px;font-size:22px;color:#c7d0d9;left:1502.40px;width:2000px;text-align:center;"><span style="display:inline-block;transform:scaleX(1.0600);transform-origin:center">12/20</span></div>
<div class="t" id="slx6" style="top:1470.10px;font-size:22px;color:#c7d0d9;left:1619.02px;width:2000px;text-align:center;"><span style="display:inline-block;transform:scaleX(1.0600);transform-origin:center">12/23</span></div>
<div class="t" id="slx7" style="top:1470.10px;font-size:22px;color:#c7d0d9;left:1737.24px;width:2000px;text-align:center;"><span style="display:inline-block;transform:scaleX(1.0600);transform-origin:center">12/26</span></div>
<div class="t" id="slx8" style="top:1470.10px;font-size:22px;color:#c7d0d9;left:1853.66px;width:2000px;text-align:center;"><span style="display:inline-block;transform:scaleX(1.0600);transform-origin:center">12/29</span></div>
<div class="t" style="left:1611.8px;top:1399.4px;width:200px;height:26px;line-height:26px;text-align:center;font-size:22px;color:#c7d0d9;transform:rotate(-90deg)">pro Tag</div>
<div class="a" style="left:2896px;top:1368.2px;width:25.7px;height:88.79999999999995px;background:#e6ad12;"></div>
<div class="a" style="left:1657px;top:1068px;width:285px;height:205px;background:#151515;border-radius:3px"></div>
<div class="t" id="tt_title" style="top:1087.88px;font-size:22.5px;color:#d8d9da;font-weight:700;left:1694.70px;"><span style="display:inline-block;transform:scaleX(0.9842);transform-origin:left">2020-12-30 15:40:11</span></div>
<div class="a" style="left:1678.8px;top:1134.40px;width:17.2px;height:3.2px;background:#5794f2"></div>
<div class="t" id="tt_l0" style="top:1125.88px;font-size:22.5px;color:#d8d9da;left:1700.60px;"><span style="display:inline-block;transform:scaleX(0.9952);transform-origin:left">PV-Leistung:</span></div>
<div class="t" id="tt_v0" style="top:1125.88px;font-size:22.5px;color:#d8d9da;font-weight:700;left:-76.40px;width:2000px;text-align:right;"><span style="display:inline-block;transform:scaleX(0.9600);transform-origin:right">104 W</span></div>
<div class="a" style="left:1678.8px;top:1168.20px;width:17.2px;height:3.2px;background:#fade2a"></div>
<div class="t" id="tt_l1" style="top:1159.67px;font-size:22.5px;color:#ffffff;font-weight:700;left:1702.60px;"><span style="display:inline-block;transform:scaleX(0.8789);transform-origin:left">Verbrauch:</span></div>
<div class="t" id="tt_v1" style="top:1159.67px;font-size:22.5px;color:#ffffff;font-weight:700;left:-76.40px;width:2000px;text-align:right;"><span style="display:inline-block;transform:scaleX(0.9600);transform-origin:right">104 W</span></div>
<div class="a" style="left:1678.8px;top:1201.20px;width:17.2px;height:3.2px;background:#56a64b"></div>
<div class="t" id="tt_l2" style="top:1192.67px;font-size:22.5px;color:#d8d9da;left:1700.60px;"><span style="display:inline-block;transform:scaleX(1.0009);transform-origin:left">Einspeisung:</span></div>
<div class="t" id="tt_v2" style="top:1192.67px;font-size:22.5px;color:#d8d9da;font-weight:700;left:-76.40px;width:2000px;text-align:right;"><span style="display:inline-block;transform:scaleX(0.9600);transform-origin:right">0 W</span></div>
<div class="a" style="left:1678.8px;top:1234.10px;width:17.2px;height:3.2px;background:#e02f44"></div>
<div class="t" id="tt_l3" style="top:1225.58px;font-size:22.5px;color:#d8d9da;left:1700.60px;"><span style="display:inline-block;transform:scaleX(1.0002);transform-origin:left">Bezug:</span></div>
<div class="t" id="tt_v3" style="top:1225.58px;font-size:22.5px;color:#d8d9da;font-weight:700;left:-76.40px;width:2000px;text-align:right;"><span style="display:inline-block;transform:scaleX(0.9600);transform-origin:right">0 W</span></div>
</body></html>
